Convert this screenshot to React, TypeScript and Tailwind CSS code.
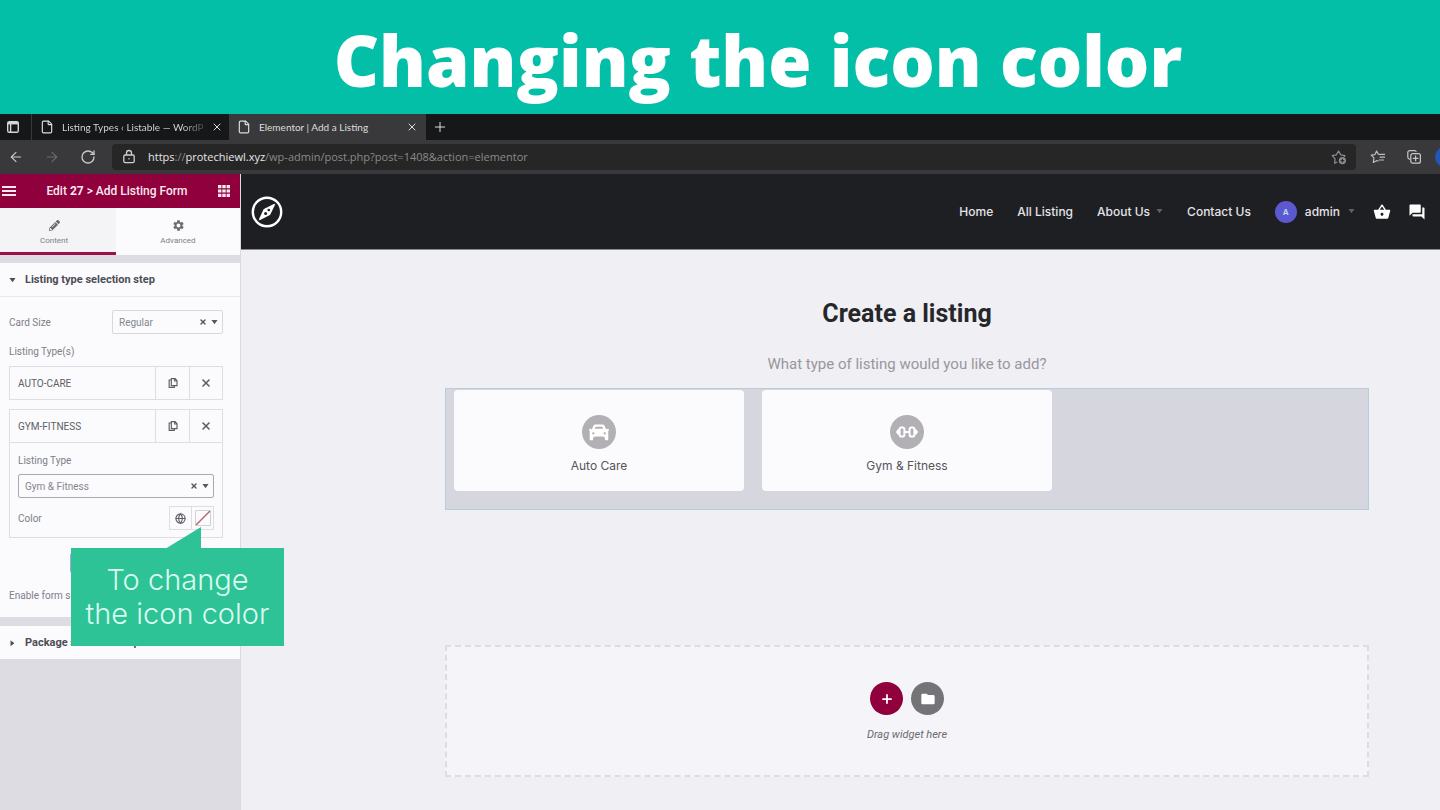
import type { ReactNode } from "react";
import { FaPencilAlt } from "react-icons/fa";
import { MdFolder, MdForum, MdSettings, MdShoppingBasket } from "react-icons/md";
import { ArrowLeft, ArrowRight, File, Globe, Plus, RotateCw, X } from "lucide-react";

function Caret({ className }: { className?: string }) {
  return (
    <svg viewBox="0 0 8 5" className={className} fill="currentColor" aria-hidden="true">
      <path d="M0.5 0h7L4 4.8z" />
    </svg>
  );
}

function TabActionsIcon() {
  return (
    <svg viewBox="0 0 14 14" className="size-3.5" fill="none" stroke="#d6d6d6" strokeWidth="1.4">
      <rect x="1.7" y="1.7" width="10.6" height="10.6" rx="1.6" />
      <path d="M2 3.2h10" strokeWidth="2.4" />
      <path d="M4.6 4v8" />
    </svg>
  );
}

function LockIcon() {
  return (
    <svg viewBox="0 0 14 16" className="h-4 w-3.5" fill="none" stroke="#cfcfcf" strokeWidth="1.3">
      <rect x="1.8" y="6" width="10.4" height="7.6" rx="1.4" />
      <path d="M4.5 6V4a2.5 2.5 0 0 1 5 0v2" />
      <circle cx="7" cy="9.8" r="0.8" fill="#cfcfcf" stroke="none" />
    </svg>
  );
}

function StarAddIcon() {
  return (
    <svg viewBox="0 0 16 16" className="size-4" fill="none" stroke="#8f8b94" strokeWidth="1.2" strokeLinejoin="round">
      <path d="M6.3 13 3.6 14.2l.5-4.4L1.2 6.6l4-.7L7.6 2l2.2 3.9 4.2.7-1 1.2" />
      <circle cx="11.4" cy="11.6" r="3.6" fill="#8f8b94" stroke="none" />
      <path d="M11.4 9.8v3.6M9.6 11.6h3.6" stroke="#2b2b2b" />
    </svg>
  );
}

function FavoritesIcon() {
  return (
    <svg viewBox="0 0 16 16" className="size-4" fill="none" stroke="#bcbcc2" strokeWidth="1.2" strokeLinejoin="round">
      <path d="M8.4 5.4 6.6 2 4.9 5.6l-3.7.5 2.7 2.8-.6 4.6 3.7-2 1.5.8M8.4 5.4H15M9.6 8.2H15M8.8 11H14" />
    </svg>
  );
}

function CollectionsIcon() {
  return (
    <svg viewBox="0 0 16 16" className="size-4" fill="none" stroke="#c6c6ca" strokeWidth="1.2">
      <path d="M4 10.6 2.8 9.8a2 2 0 0 1-1-1.8V3.6a2 2 0 0 1 2-2h4.8a2 2 0 0 1 1.8 1.2" />
      <rect x="4.8" y="4.6" width="9.6" height="9.6" rx="2" />
      <path d="M9.6 6.6v5.6M6.8 9.4h5.6" />
    </svg>
  );
}

function CompassLogo() {
  return (
    <svg viewBox="0 0 32 32" className="size-8" fill="none" stroke="#fff">
      <circle cx="16" cy="16" r="14.2" strokeWidth="2.4" />
      <path d="M23.2 8.6 18.6 18.2 8.8 23.4 13.3 13.6z" fill="#fff" strokeWidth="1.6" strokeLinejoin="round" />
      <circle cx="17.8" cy="14" r="1.3" fill="#1e1f23" stroke="none" />
      <circle cx="14.6" cy="17.6" r="1.5" fill="#1e1f23" stroke="none" />
    </svg>
  );
}

function CopyIcon() {
  return (
    <svg viewBox="0 0 12 14" className="h-3 w-2.5" fill="none" stroke="#5d6067" strokeWidth="1.4">
      <path d="M4 1.8h4.6l2.2 2.4v6H4zM8 1.8v2.8h2.8" />
      <path d="M3.8 3.4H1.4v8.8h6.2v-2" />
    </svg>
  );
}

function CarIcon() {
  return (
    <svg viewBox="0 0 24 20" className="w-[22px]" fill="#fff">
      <path
        fillRule="evenodd"
        d="M8 1.6h8c1 0 1.6.4 2 1.2l1.8 4 2-.6c.5-.1.9.2.9.7v1.6l-.9.8.3 1v7.6c0 .6-.4 1-1 1h-1.6c-.6 0-1-.4-1-1v-1.7l-2-1.4h-9l-2 1.4v1.7c0 .6-.4 1-1 1H2.9c-.6 0-1-.4-1-1v-7.600l.3-1-.9-.8V6.900c0-.5.4-.8.9-.7l2 .6 1.800-4c.4-.8 1-1.200 2-1.200zM9 4.200c-.8 0-1.300 1-1.300 2h8.600c0-1-.5-2-1.300-2zM5.800 10a1.300 1.300 0 1 0 0 2.600 1.300 1.300 0 0 0 0-2.600zM18.200 10a1.300 1.300 0 1 0 0 2.600 1.300 1.300 0 0 0 0-2.600z"
      />
    </svg>
  );
}

function DumbbellIcon() {
  return (
    <svg viewBox="0 0 24 14" className="w-6" fill="none" stroke="#fff">
      <rect x="4.6" y="2.4" width="4.8" height="9.2" rx="1.8" strokeWidth="2" />
      <rect x="14.6" y="2.4" width="4.8" height="9.2" rx="1.8" strokeWidth="2" />
      <path d="M3 4.4v5.2M21 4.4v5.2M9.6 7h4.8M1.2 7h2M20.8 7h2" strokeWidth="2" />
    </svg>
  );
}

function BrowserChrome() {
  return (
    <div className="bg-[#39393b] font-['Open_Sans',sans-serif]">
      <div className="flex h-[26px] items-stretch bg-[#161719] font-['Lato',sans-serif] text-[10px] text-[#dddddd]">
        <div className="flex w-8 items-center border-r border-[#39393b] pl-[6px]">
          <TabActionsIcon />
        </div>
        <div className="flex w-[197px] items-center gap-2 pr-2 pl-2">
          <File className="size-3.5 shrink-0" strokeWidth={2} />
          <span className="flex-1 bg-linear-to-r from-[#dddddd] from-85% to-[#4a4a4c] bg-clip-text whitespace-nowrap text-transparent">
            Listing Types ‹ Listable — WordP
          </span>
          <button aria-label="Close Listing Types">
            <X className="size-3" />
          </button>
        </div>
        <div className="flex w-[197px] items-center gap-2 bg-[#39393b] pr-2 pl-2">
          <File className="size-3.5 shrink-0" strokeWidth={2} />
          <span className="flex-1 whitespace-nowrap">Elementor | Add a Listing</span>
          <button aria-label="Close Elementor">
            <X className="size-3" />
          </button>
        </div>
        <button aria-label="New tab" className="pl-[6px]">
          <Plus className="size-4" strokeWidth={1.5} />
        </button>
      </div>
      <div className="flex h-[34px] items-center overflow-hidden">
        <div className="flex w-[112px] items-center gap-5 pl-2">
          <button aria-label="Back">
            <ArrowLeft className="size-4 text-[#c9c9c9]" strokeWidth={1.7} />
          </button>
          <button aria-label="Forward">
            <ArrowRight className="size-4 text-[#6b6b6d]" strokeWidth={1.7} />
          </button>
          <button aria-label="Refresh">
            <RotateCw className="size-4 text-[#c9c9c9]" strokeWidth={2} />
          </button>
        </div>
        <div className="flex h-[26px] flex-1 items-center gap-3 rounded bg-[#262626] pr-[9px] pl-[10px] text-[11px] text-[#8a8a8a]">
          <LockIcon />
          <span className="flex-1 whitespace-nowrap">
            <span className="text-[#e6e6e6]">https</span>://<span className="text-[#e6e6e6]">protechiewl.xyz</span>
            /wp-admin/post.php?post=1408&amp;action=elementor
          </span>
          <StarAddIcon />
        </div>
        <div className="flex items-center gap-5 pl-[14px]">
          <FavoritesIcon />
          <CollectionsIcon />
        </div>
        <div className="ml-[13px] w-[5px] overflow-hidden">
          <div className="size-5 rounded-full bg-[#2456b8]" />
        </div>
      </div>
    </div>
  );
}

interface SelectBoxProps {
  id: string;
  value: string;
  className: string;
}

function SelectBox({ id, value, className }: SelectBoxProps) {
  return (
    <div className={`relative ${className}`}>
      <select id={id} className="h-6 w-full appearance-none rounded-xs border border-inherit bg-transparent px-[6px] text-[#85878f]">
        <option>{value}</option>
      </select>
      <span className="pointer-events-none absolute inset-y-0 right-[5px] flex items-center gap-1 text-[#55585f]">
        <X className="size-2" strokeWidth={4} />
        <Caret className="w-[7px]" />
      </span>
    </div>
  );
}

function RepeaterItem({ title, children }: { title: string; children?: ReactNode }) {
  return (
    <div className="border border-[#dfdde4]">
      <div className="flex h-8 items-stretch text-[#5d6067]">
        <button className="flex-1 pl-2 text-left">{title}</button>
        <button aria-label={`Duplicate ${title}`} className="flex w-[34px] items-center justify-center border-l border-[#dfdde4]">
          <CopyIcon />
        </button>
        <button aria-label={`Remove ${title}`} className="flex w-[33px] items-center justify-center border-l border-[#dfdde4]">
          <X className="size-3" strokeWidth={3.2} />
        </button>
      </div>
      {children}
    </div>
  );
}

function Callout() {
  return (
    <div className="absolute top-[374px] left-[71px] z-10 w-[213px] bg-[#2ec297] py-[15px] text-center font-['Inter',sans-serif] text-[29px] leading-[34px] font-light whitespace-nowrap text-[#d9fbee]">
      <svg viewBox="0 0 36 22" className="absolute -top-[21px] left-[94px] w-9" fill="#2ec297" aria-hidden="true">
        <path d="M0 22 36 0v22z" />
      </svg>
      To change
      <br />
      the icon color
    </div>
  );
}

function EditorPanel() {
  return (
    <aside className="relative w-[241px] shrink-0 border-r border-[#dcdae0] bg-[#dddce3] font-['Roboto',sans-serif] text-[11px] text-[#7d7f88]">
      <div className="flex h-[34px] items-center justify-between bg-[#8f003c] px-[2px] text-[#fbe9ef]">
        <button aria-label="Menu">
          <svg viewBox="0 0 14 12" className="w-3.5" stroke="currentColor" strokeWidth="2">
            <path d="M0 2h14M0 6h14M0 10h14" />
          </svg>
        </button>
        <h2 className="text-[12px] font-medium">
          Edit <b>27</b> &gt; Add Listing Form
        </h2>
        <button aria-label="Widgets" className="pr-2">
          <svg viewBox="0 0 12 12" className="w-3" fill="currentColor">
            <path d="M0 0h3.4v3.2H0zM4.3 0h3.4v3.2H4.3zM8.6 0H12v3.2H8.6zM0 4.4h3.4v3.2H0zM4.3 4.4h3.4v3.2H4.3zM8.6 4.4H12v3.2H8.6zM0 8.8h3.4V12H0zM4.3 8.8h3.4V12H4.3zM8.6 8.8H12V12H8.6z" />
          </svg>
        </button>
      </div>

      <div className="flex h-[47px] bg-[#fbfafd] text-[8px]">
        <button className="flex w-[116px] flex-col items-center gap-1 border-b-3 border-[#9b1148] bg-[#f4f3f6] pt-3 pr-2">
          <FaPencilAlt className="size-[11px] text-[#6a6c73]" />
          Content
        </button>
        <button className="flex flex-1 flex-col items-center gap-[3px] pt-[11px]">
          <MdSettings className="size-[13px] text-[#6a6c73]" />
          Advanced
        </button>
      </div>

      <section className="mt-2 bg-[#fbfafd]">
        <h3 className="border-b border-[#e9e7ed]">
          <button className="flex h-[33px] w-full items-center gap-[9px] pt-[2px] pl-[9px] font-bold text-[#4c4e55]">
            <Caret className="w-[7px]" />
            Listing type selection step
          </button>
        </h3>
        <div className="flex h-[320px] flex-col pt-[13px] pr-[17px] pl-[9px] text-[10px]">
          <div className="flex items-center justify-between">
            <label htmlFor="card-size">Card Size</label>
            <SelectBox id="card-size" value="Regular" className="w-[111px] border-[#d9d7de]" />
          </div>
          <p className="mt-[10px] mb-[6px] leading-4">Listing Type(s)</p>
          <div className="flex flex-col gap-[9px]">
            <RepeaterItem title="AUTO-CARE" />
            <RepeaterItem title="GYM-FITNESS">
              <div className="border-t border-[#dfdde4] px-2 pt-[10px] pb-[7px]">
                <label htmlFor="listing-type" className="block leading-4">
                  Listing Type
                </label>
                <SelectBox id="listing-type" value="Gym &amp; Fitness" className="mt-[5px] border-[#aaa8b2]" />
                <div className="mt-2 flex items-center justify-between">
                  <span>Color</span>
                  <div className="flex h-6 items-stretch border border-[#dfdde4]">
                    <button aria-label="Global colors" className="flex w-[22px] items-center justify-center border-r border-[#dfdde4]">
                      <Globe className="size-[11px] text-[#5d6067]" strokeWidth={2.4} />
                    </button>
                    <button aria-label="Pick a color" className="flex w-[21px] items-center justify-center">
                      <svg viewBox="0 0 16 16" className="size-4" fill="none">
                        <path d="M.5.5h15v15H.5z" stroke="#d3d0d8" />
                        <path d="M1 15 15 1" stroke="#b5656f" strokeWidth="1.4" />
                      </svg>
                    </button>
                  </div>
                </div>
              </div>
            </RepeaterItem>
          </div>
          <button aria-label="Add item" className="mx-auto mt-[15px] h-5 w-[92px] rounded-xs bg-[#a3a6d8]" />
          <p className="mt-[15px] leading-4">Enable form s</p>
        </div>
      </section>

      <section className="mt-[9px] bg-[#fbfafd]">
        <h3>
          <button className="flex h-[33px] w-full items-center gap-[9px] pt-[2px] pl-[9px] font-bold text-[#4c4e55]">
            <Caret className="w-[7px] -rotate-90" />
            Package selection step
          </button>
        </h3>
      </section>

      <Callout />
    </aside>
  );
}

function SiteHeader() {
  return (
    <header className="flex h-[76px] items-center justify-between border-b border-[#8b8a90] bg-[#1e1f23] pr-[14px] pl-[10px] text-[12px] font-medium text-[#e4e3e8]">
      <a href="#" aria-label="Listable home">
        <CompassLogo />
      </a>
      <nav className="flex items-center">
        <a href="#" className="mr-6">Home</a>
        <a href="#" className="mr-6">All Listing</a>
        <a href="#" className="mr-6 flex items-center gap-[6px]">
          About Us
          <Caret className="w-[7px] text-[#5f5f65]" />
        </a>
        <a href="#" className="mr-6">Contact Us</a>
        <a href="#" className="mr-[18px] flex items-center gap-2">
          <span className="flex size-[22px] items-center justify-center rounded-full bg-[#5b58d0] text-[8px] font-bold text-[#b9d3e8]">A</span>
          admin
          <Caret className="w-[7px] text-[#5f5f65]" />
        </a>
        <a href="#" aria-label="Cart" className="mr-[17px]">
          <MdShoppingBasket className="size-[18px] text-white" />
        </a>
        <a href="#" aria-label="Messages">
          <MdForum className="size-[18px] text-white" />
        </a>
      </nav>
    </header>
  );
}

function TypeCard({ label, icon }: { label: string; icon: ReactNode }) {
  return (
    <a href="#" className="flex h-[101px] flex-col items-center rounded-sm bg-[#fbfafd] pt-[25px] text-[12px] text-[#55555b]">
      <span className="mb-2 flex size-[34px] items-center justify-center rounded-full bg-[#b3b0b5]">{icon}</span>
      {label}
    </a>
  );
}

export default function App() {
  return (
    <div className="flex min-h-screen flex-col bg-[#f0eff3]">
      <h1 className="flex h-[114px] items-center justify-center bg-[#04bfa7] pt-[6px] pl-[76px] font-['Open_Sans',sans-serif] text-[70px] leading-none font-extrabold text-white">
        Changing the icon color
      </h1>
      <BrowserChrome />
      <div className="flex flex-1">
        <EditorPanel />
        <main className="flex-1 font-['Inter',sans-serif]">
          <SiteHeader />
          <div className="pt-12 pr-[71px] pb-8 pl-[204px] text-center">
            <h2 className="font-['Roboto',sans-serif] text-[25px] leading-8 font-bold text-[#26272b]">Create a listing</h2>
            <p className="mt-[22px] font-['Roboto',sans-serif] text-[15px] leading-6 text-[#98979d]">
              What type of listing would you like to add?
            </p>
            <div className="mt-3 grid grid-cols-3 gap-[18px] border border-[#b5cddd] bg-[#d6d6df] px-2 pt-px pb-[18px]">
              <TypeCard label="Auto Care" icon={<CarIcon />} />
              <TypeCard label="Gym &amp; Fitness" icon={<DumbbellIcon />} />
            </div>
            <div className="mt-[135px] flex h-[132px] flex-col items-center border-2 border-dashed border-[#dddce3] bg-[#f5f4f8] pt-[35px]">
              <div className="flex gap-2">
                <button aria-label="Add section" className="flex size-[33px] items-center justify-center rounded-full bg-[#8f003c] text-white">
                  <Plus className="size-3.5" strokeWidth={3} />
                </button>
                <button aria-label="Add template" className="flex size-[33px] items-center justify-center rounded-full bg-[#747378] text-white">
                  <MdFolder className="size-4" />
                </button>
              </div>
              <p className="mt-3 font-['Roboto',sans-serif] text-[11px] leading-4 text-[#6a6a70] italic">Drag widget here</p>
            </div>
          </div>
        </main>
      </div>
    </div>
  );
}
